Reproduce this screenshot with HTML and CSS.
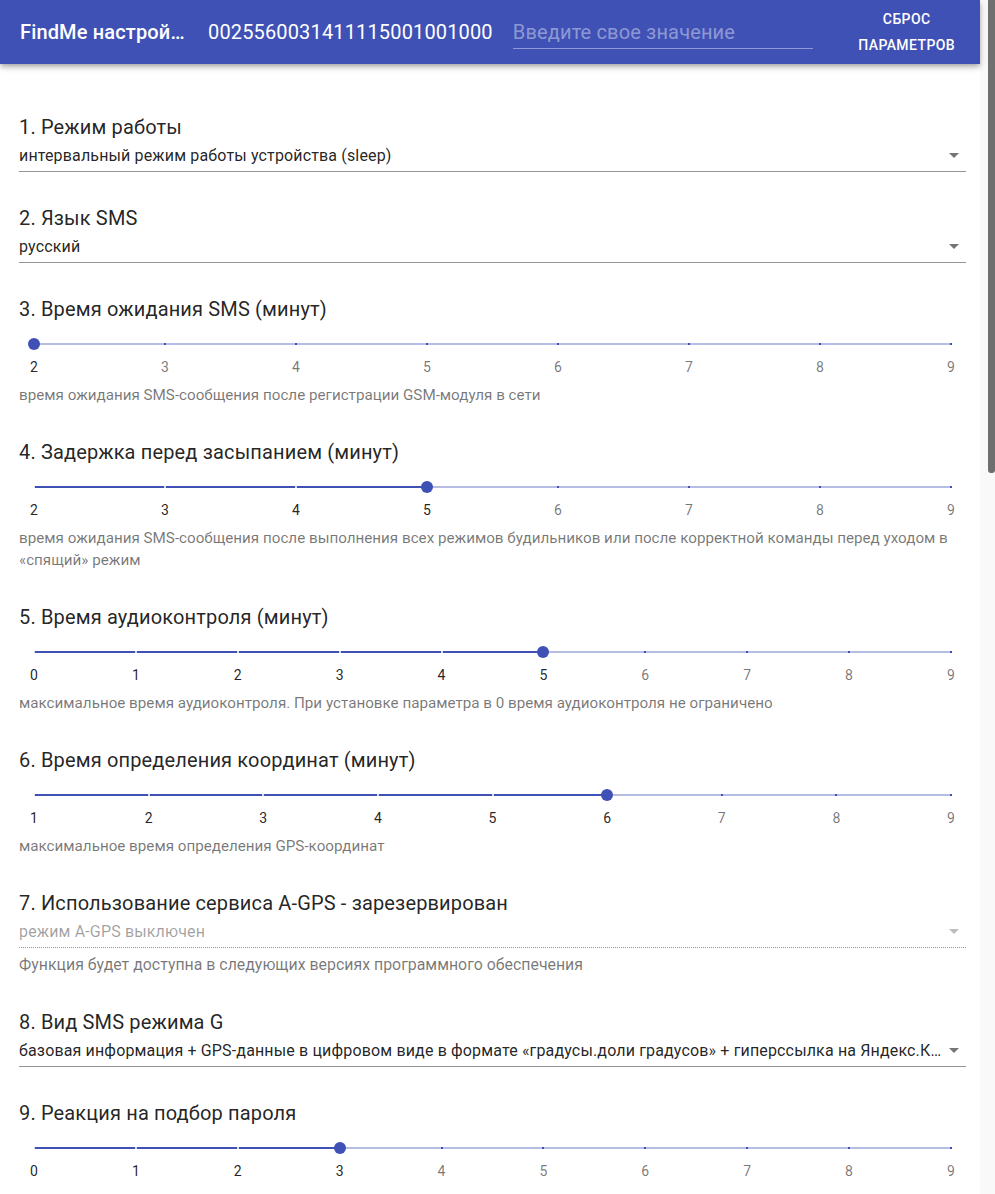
FILE: index.html
```html
<!DOCTYPE html>
<html lang="ru">
<head>
<meta charset="utf-8">
<title>FindMe настройки</title>
<link rel="stylesheet" href="styles.css">
</head>
<body>
<div class="page">
<header class="appbar">
  <div class="app-title">FindMe настройки</div>
  <div class="app-code">0025560031411115001001000</div>
  <label class="app-input"><input type="text" placeholder="Введите свое значение"></label>
  <button class="reset-btn" type="button">Сброс параметров</button>
</header>

<main class="content">
  <section class="field">
    <h2 class="field-title">1. Режим работы</h2>
    <div class="select">
      <span class="select-value">интервальный режим работы устройства (sleep)</span>
      <svg class="select-icon" viewBox="0 0 24 24"><path d="M7 10l5 5 5-5z"/></svg>
    </div>
  </section>

  <section class="field">
    <h2 class="field-title">2. Язык SMS</h2>
    <div class="select">
      <span class="select-value">русский</span>
      <svg class="select-icon" viewBox="0 0 24 24"><path d="M7 10l5 5 5-5z"/></svg>
    </div>
  </section>

  <section class="field">
    <h2 class="field-title">3. Время ожидания SMS (минут)</h2>
    <div class="slider">
      <div class="rail">
        <div class="track" style="width:0%"></div>
        <div class="ticks"><i class="on"></i><i></i><i></i><i></i><i></i><i></i><i></i><i></i></div>
      </div>
      <div class="marks"><span class="on">2</span><span>3</span><span>4</span><span>5</span><span>6</span><span>7</span><span>8</span><span>9</span></div>
    </div>
    <p class="helper">время ожидания SMS-сообщения после регистрации GSM-модуля в сети</p>
  </section>

  <section class="field">
    <h2 class="field-title">4. Задержка перед засыпанием (минут)</h2>
    <div class="slider">
      <div class="rail">
        <div class="track" style="width:42.857%"></div>
        <div class="ticks"><i class="on"></i><i class="on"></i><i class="on"></i><i class="on"></i><i></i><i></i><i></i><i></i></div>
      </div>
      <div class="marks"><span class="on">2</span><span class="on">3</span><span class="on">4</span><span class="on">5</span><span>6</span><span>7</span><span>8</span><span>9</span></div>
    </div>
    <p class="helper">время ожидания SMS-сообщения после выполнения всех режимов будильников или после корректной команды перед уходом в «спящий» режим</p>
  </section>

  <section class="field">
    <h2 class="field-title">5. Время аудиоконтроля (минут)</h2>
    <div class="slider">
      <div class="rail">
        <div class="track" style="width:55.556%"></div>
        <div class="ticks"><i class="on"></i><i class="on"></i><i class="on"></i><i class="on"></i><i class="on"></i><i class="on"></i><i></i><i></i><i></i><i></i></div>
      </div>
      <div class="marks"><span class="on">0</span><span class="on">1</span><span class="on">2</span><span class="on">3</span><span class="on">4</span><span class="on">5</span><span>6</span><span>7</span><span>8</span><span>9</span></div>
    </div>
    <p class="helper">максимальное время аудиоконтроля. При установке параметра в 0 время аудиоконтроля не ограничено</p>
  </section>

  <section class="field">
    <h2 class="field-title">6. Время определения координат (минут)</h2>
    <div class="slider">
      <div class="rail">
        <div class="track" style="width:62.5%"></div>
        <div class="ticks"><i class="on"></i><i class="on"></i><i class="on"></i><i class="on"></i><i class="on"></i><i class="on"></i><i></i><i></i><i></i></div>
      </div>
      <div class="marks"><span class="on">1</span><span class="on">2</span><span class="on">3</span><span class="on">4</span><span class="on">5</span><span class="on">6</span><span>7</span><span>8</span><span>9</span></div>
    </div>
    <p class="helper">максимальное время определения GPS-координат</p>
  </section>

  <section class="field">
    <h2 class="field-title">7. Использование сервиса A-GPS - зарезервирован</h2>
    <div class="select disabled">
      <span class="select-value">режим A-GPS выключен</span>
      <svg class="select-icon" viewBox="0 0 24 24"><path d="M7 10l5 5 5-5z"/></svg>
    </div>
    <p class="helper helper-select">Функция будет доступна в следующих версиях программного обеспечения</p>
  </section>

  <section class="field">
    <h2 class="field-title">8. Вид SMS режима G</h2>
    <div class="select">
      <span class="select-value">базовая информация + GPS-данные в цифровом виде в формате «градусы.доли градусов» + гиперссылка на Яндекс.Карты</span>
      <svg class="select-icon" viewBox="0 0 24 24"><path d="M7 10l5 5 5-5z"/></svg>
    </div>
  </section>

  <section class="field">
    <h2 class="field-title">9. Реакция на подбор пароля</h2>
    <div class="slider">
      <div class="rail">
        <div class="track" style="width:33.333%"></div>
        <div class="ticks"><i class="on"></i><i class="on"></i><i class="on"></i><i class="on"></i><i></i><i></i><i></i><i></i><i></i><i></i></div>
      </div>
      <div class="marks"><span class="on">0</span><span class="on">1</span><span class="on">2</span><span class="on">3</span><span>4</span><span>5</span><span>6</span><span>7</span><span>8</span><span>9</span></div>
    </div>
  </section>
</main>
</div>
<aside class="scrollbar" aria-hidden="true"><div class="scroll-thumb"></div></aside>
</body>
</html>
```

FILE: styles.css
```css
html {
  overflow-x: hidden;
}

body {
  margin: 0;
  display: flex;
  align-items: flex-start;
  font-family: Roboto, "Noto Sans", "Liberation Sans", sans-serif;
  color: rgba(0, 0, 0, 0.87);
  background: #ffffff;
}

.page {
  flex: 1;
  min-width: 0;
}

/* ---------- Fake scrollbar ---------- */
.scrollbar {
  flex: none;
  position: sticky;
  top: 0;
  width: 15px;
  height: 100vh;
  background: #f9f9f9;
  display: flex;
  justify-content: flex-end;
}

.scroll-thumb {
  width: 7px;
  height: 473px;
  background: #6f6f6f;
  border-radius: 0 0 3px 3px;
}

/* ---------- App bar ---------- */
.appbar {
  display: flex;
  align-items: center;
  height: 64px;
  padding: 0 9px 0 20px;
  background: #3f51b5;
  color: #ffffff;
  box-shadow: 0 2px 4px -1px rgba(0, 0, 0, 0.2), 0 4px 5px 0 rgba(0, 0, 0, 0.14), 0 1px 10px 0 rgba(0, 0, 0, 0.12);
  position: relative;
  z-index: 2;
}

.app-title {
  flex: none;
  width: 166px;
  margin-right: 22px;
  font-size: 20px;
  font-weight: 500;
  line-height: 24px;
  letter-spacing: 0.15px;
  white-space: nowrap;
  overflow: hidden;
  text-overflow: ellipsis;
}

.app-code {
  flex: none;
  margin-right: 20px;
  font-size: 20px;
  line-height: 24px;
  letter-spacing: 0.15px;
  white-space: nowrap;
}

.app-input {
  flex: none;
  display: block;
  width: 300px;
  padding: 4px 0;
  border-bottom: 1px solid rgba(255, 255, 255, 0.42);
}

.app-input input {
  display: block;
  width: 100%;
  height: 24px;
  padding: 0;
  margin: 0;
  border: 0;
  outline: none;
  background: transparent;
  color: #ffffff;
  font: 400 20px/24px Roboto, "Noto Sans", sans-serif;
  letter-spacing: 0.15px;
}

.app-input input::placeholder {
  color: rgba(255, 255, 255, 0.42);
  opacity: 1;
}

.reset-btn {
  margin-left: auto;
  width: min-content;
  padding: 0 16px;
  border: 0;
  background: transparent;
  color: #ffffff;
  font: 500 14px/26px Roboto, "Noto Sans", sans-serif;
  letter-spacing: 0.4px;
  text-transform: uppercase;
  text-align: center;
  cursor: pointer;
}

/* ---------- Content ---------- */
.content {
  padding: 51px 14px 0 19px;
}

.field {
  margin-bottom: 34px;
}

.field-title {
  margin: 0;
  font-size: 20px;
  font-weight: 400;
  line-height: 24px;
  letter-spacing: 0.15px;
  color: rgba(0, 0, 0, 0.87);
}

/* select */
.select {
  position: relative;
  padding: 7px 22px 6px 0;
  border-bottom: 1px solid rgba(0, 0, 0, 0.42);
  font-size: 16px;
  line-height: 19px;
  letter-spacing: 0.15px;
}

.select-value {
  display: block;
  white-space: nowrap;
  overflow: hidden;
  text-overflow: ellipsis;
}

.select-icon {
  position: absolute;
  right: 0;
  top: calc(50% - 12px);
  width: 24px;
  height: 24px;
  fill: rgba(0, 0, 0, 0.54);
}

.select.disabled {
  color: rgba(0, 0, 0, 0.38);
  border-bottom: 1px dotted rgba(0, 0, 0, 0.42);
}

.select.disabled .select-icon {
  fill: rgba(0, 0, 0, 0.26);
}

/* helper */
.helper {
  margin: 7px 0 0;
  font-size: 15.2px;
  line-height: 22px;
  color: rgba(0, 0, 0, 0.54);
}

.helper-select {
  margin-top: 6px;
  font-size: 15.9px;
}

/* slider */
.slider {
  margin: 22px 15px 0;
}

.rail {
  position: relative;
  display: flex;
  height: 2px;
  background: rgba(63, 81, 181, 0.38);
}

.track {
  position: relative;
  height: 2px;
  background: #3f51b5;
}

.track::after {
  content: "";
  position: absolute;
  right: -6px;
  top: -5px;
  width: 12px;
  height: 12px;
  border-radius: 50%;
  background: #3f51b5;
  z-index: 2;
}

.ticks {
  position: absolute;
  inset: 0;
  display: flex;
  justify-content: space-between;
  z-index: 1;
}

.ticks i {
  position: relative;
  width: 0;
  height: 2px;
}

.ticks i::before {
  content: "";
  position: absolute;
  left: -1px;
  top: 0;
  width: 2px;
  height: 2px;
  background: #3f51b5;
}

.ticks i.on::before {
  background: rgba(255, 255, 255, 0.8);
}

.marks {
  display: flex;
  justify-content: space-between;
  margin-top: 12px;
  font-size: 14px;
  line-height: 20px;
  color: rgba(0, 0, 0, 0.54);
}

.marks span {
  width: 0;
  display: flex;
  justify-content: center;
  white-space: nowrap;
}

.marks span.on {
  color: rgba(0, 0, 0, 0.87);
}
```
